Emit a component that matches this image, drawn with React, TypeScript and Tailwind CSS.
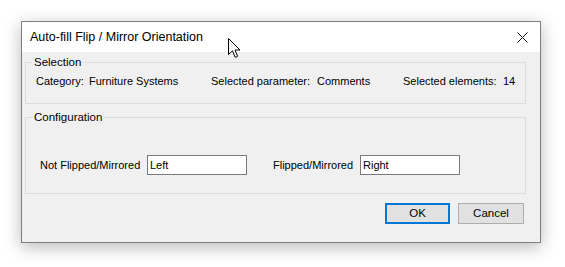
const font = { fontFamily: '"Segoe UI", "Liberation Sans", Arial, sans-serif' };

function Cursor() {
  return (
    <svg className="absolute left-[228px] top-[38px]" width="13" height="21" viewBox="0 0 13 21">
      <path d="M0.5 0.5 L0.5 16.5 L4.5 12.8 L7.2 19.3 L9.6 18.3 L7 12 L12 12 Z" fill="#fff" stroke="#000" strokeWidth="1" strokeLinejoin="miter" />
    </svg>
  );
}

function GroupBox({ title, className, children }: { title: string; className: string; children: React.ReactNode }) {
  return (
    <fieldset className={`border border-[#dcdcdc] px-[6px] m-0 min-w-0 ${className}`}>
      <legend className="px-[2px] text-[11.5px] leading-[16px] text-black">{title}</legend>
      {children}
    </fieldset>
  );
}

export default function App() {
  return (
    <div className="relative w-[565px] h-[267px] bg-white pl-[21px] pt-[21px]" style={font}>
      <div className="w-[520px] h-[222px] border border-[#7e7e7e] bg-[#f0f0f0] shadow-[0_4px_16px_rgba(0,0,0,0.28)] flex flex-col">
        <div className="h-[30px] bg-white flex items-center justify-between pl-[8px] pr-[12px] shrink-0">
          <span className="text-[12.5px] text-black">Auto-fill Flip / Mirror Orientation</span>
          <svg width="11" height="11" viewBox="0 0 11 11">
            <path d="M0.5 0.5 L10.5 10.5 M10.5 0.5 L0.5 10.5" stroke="#111" strokeWidth="1" />
          </svg>
        </div>
        <div className="flex flex-col pl-[3px] pr-[14px] pt-[2px]">
          <GroupBox title="Selection" className="h-[50px]">
            <div className="flex whitespace-nowrap text-[11px] leading-[16px] text-black mt-[3px] ml-[4px]">
              <span className="w-[53px] shrink-0">Category:</span>
              <span className="w-[122px] shrink-0">Furniture Systems</span>
              <span className="w-[106px] shrink-0">Selected parameter:</span>
              <span className="w-[86px] shrink-0">Comments</span>
              <span className="w-[100px] shrink-0">Selected elements:</span>
              <span>14</span>
            </div>
          </GroupBox>
          <GroupBox title="Configuration" className="h-[85px] mt-[5px]">
            <div className="flex items-center whitespace-nowrap text-[11px] text-black mt-[30px] ml-[8px]">
              <span className="w-[107px] shrink-0">Not Flipped/Mirrored</span>
              <input
                readOnly
                value="Left"
                className="w-[100px] h-[20px] shrink-0 border border-[#7a7a7a] bg-white px-[2px] text-[11px] text-black outline-none"
                style={font}
              />
              <span className="w-[87px] ml-[26px] shrink-0">Flipped/Mirrored</span>
              <input
                readOnly
                value="Right"
                className="w-[100px] h-[20px] shrink-0 border border-[#7a7a7a] bg-white px-[2px] text-[11px] text-black outline-none"
                style={font}
              />
            </div>
          </GroupBox>
          <div className="flex justify-end gap-[8px] mt-[9px] pr-[2px]">
            <button className="w-[65px] h-[21px] border-2 border-[#0078d7] bg-[#e1e1e1] text-[11.5px] text-black">OK</button>
            <button className="w-[66px] h-[21px] border border-[#adadad] bg-[#e1e1e1] text-[11.5px] text-black">Cancel</button>
          </div>
        </div>
      </div>
      <Cursor />
    </div>
  );
}
